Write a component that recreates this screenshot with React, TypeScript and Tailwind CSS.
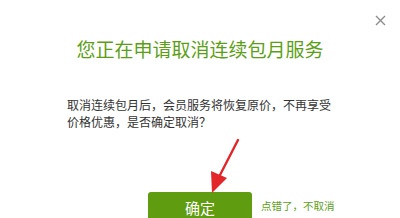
function CloseIcon() {
    return (
        <svg width="11" height="11" viewBox="0 0 11 11" className="block">
            <path d="M1 1 L10 10 M10 1 L1 10" stroke="#8c8c8c" strokeWidth="1.4" />
        </svg>
    )
}

function Arrow() {
    return (
        <svg width="40" height="60" viewBox="0 0 40 60" className="absolute left-[200px] top-[136px] pointer-events-none">
            <path d="M38 4 L20 39" stroke="#e3262a" strokeWidth="2.4" strokeLinecap="round" />
            <polygon points="12,57 11,35 27,42" fill="#e3262a" />
        </svg>
    )
}

function App() {
    return (
        <div className="relative w-[400px] h-[218px] overflow-hidden bg-white" style={{ fontFamily: '"Noto Sans CJK SC", "Noto Sans", sans-serif' }}>
            <button type="button" className="absolute left-[375px] top-[15px]">
                <CloseIcon />
            </button>

            <div className="pt-[37px] text-center">
                <h1 className="text-[19px] leading-[24px] text-[#5c9f17]">您正在申请取消连续包月服务</h1>
            </div>

            <div className="mt-[35px] pl-[67px] text-[12px] leading-[17px] text-[#333333]">
                <p>取消连续包月后，会员服务将恢复原价，不再享受</p>
                <p>价格优惠，是否确定取消？</p>
            </div>

            <div className="mt-[62px] grid grid-cols-[1fr_104px_1fr] items-start">
                <div></div>
                <button type="button" className="flex h-[31px] w-[104px] items-center justify-center rounded-t-[3px] bg-[#5f9c0f] text-[15px] leading-[16px] text-white">
                    确定
                </button>
                <div className="pl-[9px] pt-[8px] text-[10.5px] leading-[12px]">
                    <a className="block text-[#5c9f17] cursor-pointer">点错了，不取消</a>
                </div>
            </div>

            <Arrow />
        </div>
    )
}

export default App
